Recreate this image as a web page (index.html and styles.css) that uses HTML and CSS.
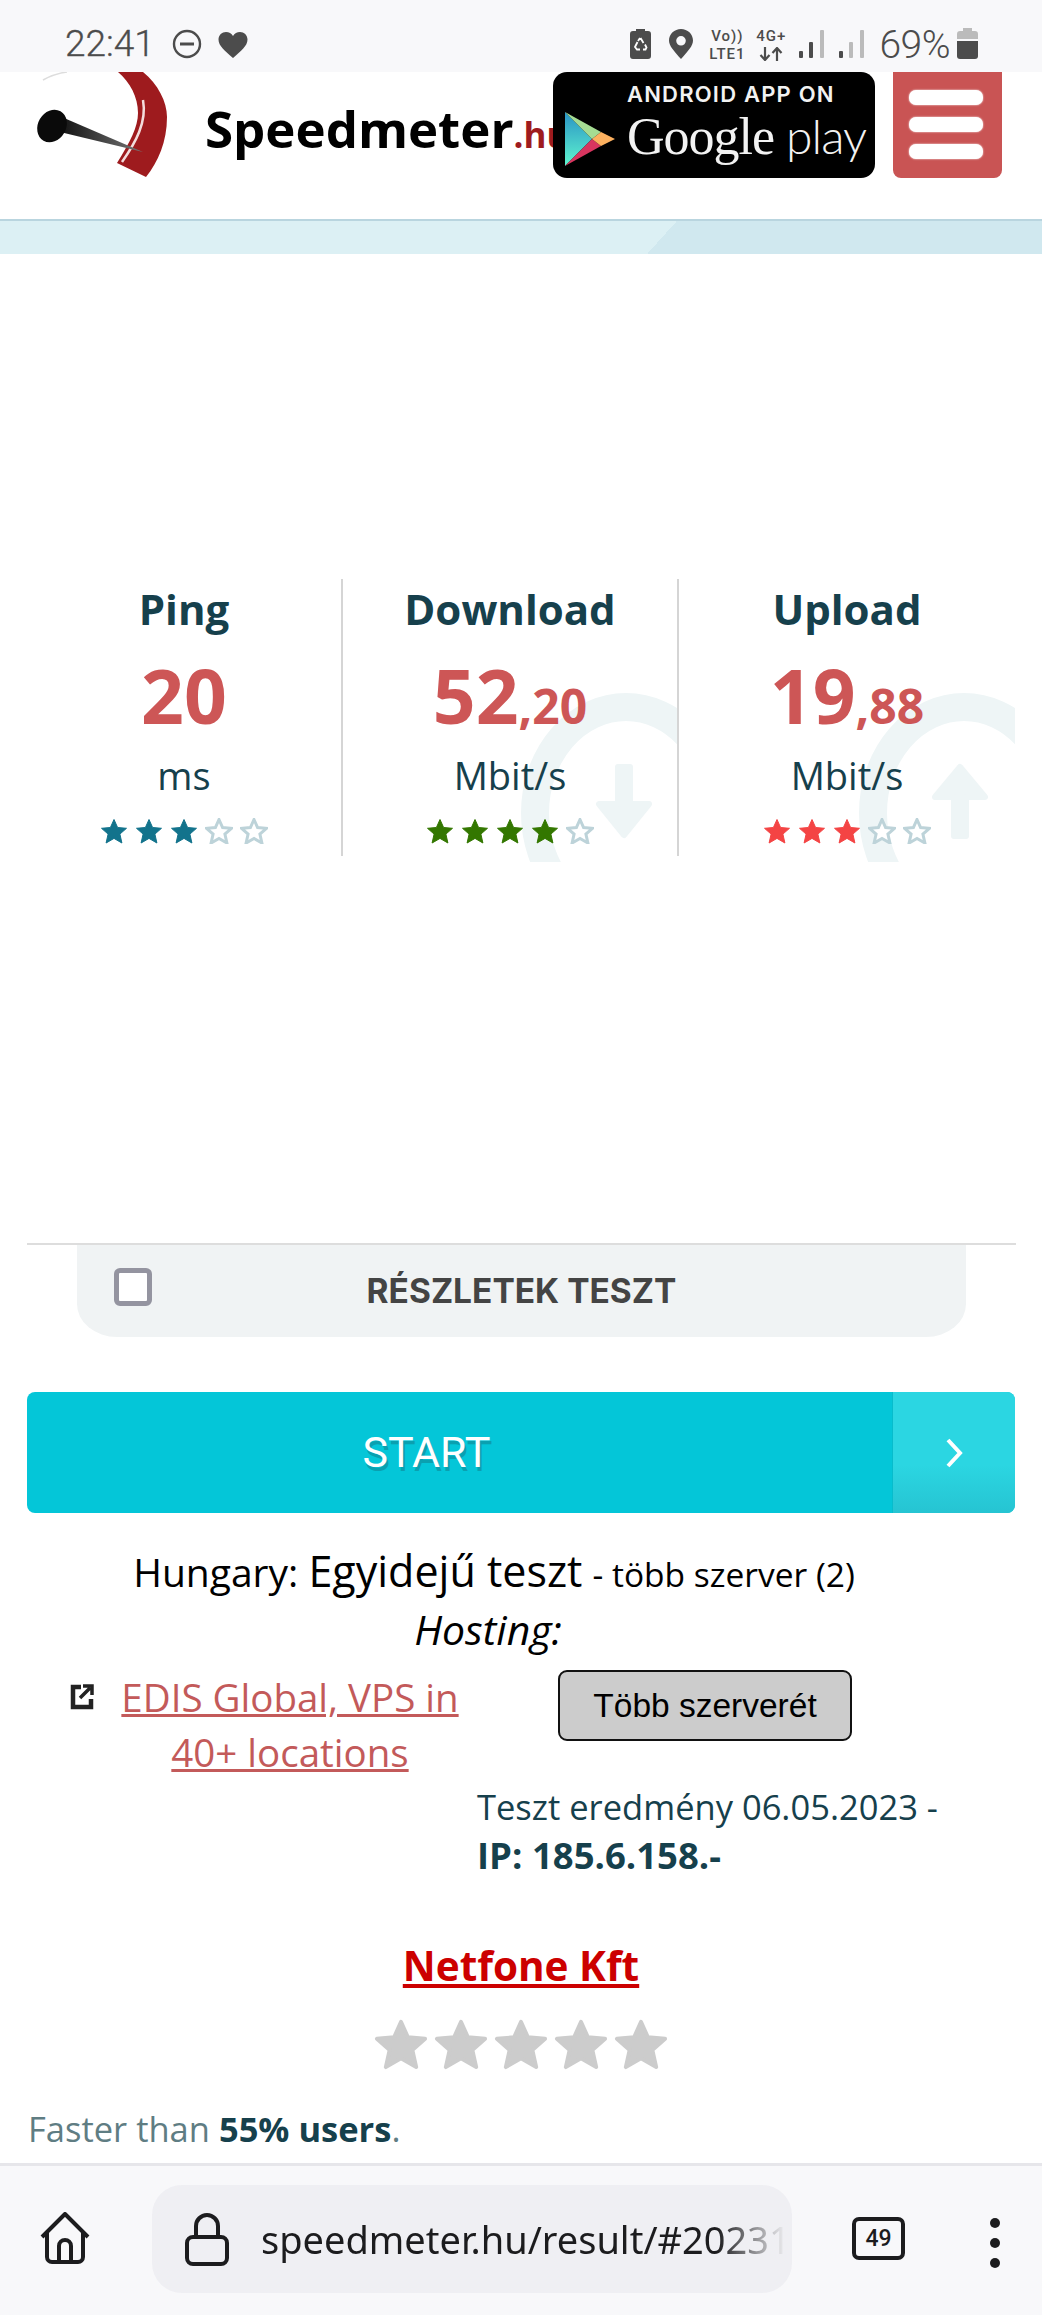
FILE: index.html
```html
<!DOCTYPE html>
<html>
<head>
    <title>Speedmeter.hu</title>
    <link rel="stylesheet" href="styles.css">
</head>
<body>
    <svg class="defs" width="0" height="0">
        <symbol id="star" viewBox="0 0 28 26">
            <path d="M14 1.5l3.6 8 8.9.8-6.6 5.8 2 8.9L14 20.4 6.1 25l2-8.9-6.6-5.8 8.9-.8z"/>
        </symbol>
        <linearGradient id="play-left" x1="0" y1="0" x2="0" y2="1">
            <stop offset="0" stop-color="#2a93c4"/>
            <stop offset="1" stop-color="#5ff5cf"/>
        </linearGradient>
        <linearGradient id="needle" x1="0" y1="0" x2="1" y2="0">
            <stop offset="0" stop-color="#111"/>
            <stop offset="1" stop-color="#777"/>
        </linearGradient>
    </svg>
    <div class="page">
        <div class="statusbar">
            <span class="clock">22:41</span>
            <svg class="ic-dnd" viewBox="0 0 30 30"><circle cx="15" cy="15" r="13" fill="none" stroke="#4c4c4c" stroke-width="2.4"/><path d="M8 15h14" stroke="#4c4c4c" stroke-width="3"/></svg>
            <svg class="ic-heart" viewBox="0 0 30 26"><path d="M15 26C7 19 .5 14 .5 7.5 .5 3 4 0 8 0c3 0 5.500 1.500 7 4 1.500-2.500 4-4 7-4 4 0 7.500 3 7.500 7.500C29.500 14 23 19 15 26z" fill="#4c4c4c"/></svg>
            <div class="status-right">
                <svg class="ic-saver" viewBox="0 0 21 30"><path d="M6 0h9v2h3a3 3 0 0 1 3 3v22a3 3 0 0 1-3 3H3a3 3 0 0 1-3-3V5a3 3 0 0 1 3-3h3z" fill="#4c4c4c"/><path d="M10.500 9l3 5M7.500 13l-2.500 5 2 2.500h3M13 20.500h2.500l1-2-1.500-3M10 9l-2 3" fill="none" stroke="#fff" stroke-width="1.800"/></svg>
                <svg class="ic-pin" viewBox="0 0 24 30"><path fill-rule="evenodd" d="M12 30C5 22 0 17 0 11.500 0 5 5.500 0 12 0s12 5 12 11.500C24 17 19 22 12 30zM12 7a4.800 4.800 0 1 0 0 9.600A4.800 4.800 0 0 0 12 7z" fill="#4c4c4c"/></svg>
                <div class="net net-volte"><span>Vo))</span><span>LTE1</span></div>
                <div class="net net-4g">
                    <span>4G+</span>
                    <svg class="ic-updown" viewBox="0 0 24 14"><path d="M6 0v12M1.500 8L6 13l4.500-5M18 14V2M13.500 6L18 1l4.500 5" fill="none" stroke="#4c4c4c" stroke-width="2.200"/></svg>
                </div>
                <svg class="ic-signal" viewBox="0 0 26 28"><rect x="0" y="21" width="4" height="7" rx="1" fill="#4c4c4c"/><rect x="10" y="12" width="4" height="16" rx="1" fill="#4c4c4c"/><rect x="21" y="0" width="4" height="28" rx="1" fill="#bbb"/></svg>
                <svg class="ic-signal" viewBox="0 0 26 28"><rect x="0" y="21" width="4" height="7" rx="1" fill="#4c4c4c"/><rect x="10" y="12" width="4" height="16" rx="1" fill="#bbb"/><rect x="21" y="0" width="4" height="28" rx="1" fill="#bbb"/></svg>
                <span class="battery-pct">69%</span>
                <svg class="ic-battery" viewBox="0 0 21 31"><path d="M6 0h9v3h3a3 3 0 0 1 3 3v5H0V6a3 3 0 0 1 3-3h3z" fill="#bbb"/><path d="M0 13h21v15a3 3 0 0 1-3 3H3a3 3 0 0 1-3-3z" fill="#4c4c4c"/></svg>
            </div>
        </div>

        <div class="topbar">
            <div class="brand">
                <svg class="logo" viewBox="0 0 190 107">
                    <path d="M118 0H143C158 12 167 30 167 45 167 70 158 90 146 105L117 91C130 70 138 55 138 41 138 25 130 10 118 0z" fill="#9e1b1e"/>
                    <path d="M143 28C147 50 136 70 122 90" fill="none" stroke="#f3dcdc" stroke-width="2.500"/>
                    <path d="M43 8C50 4 58 1 67 0" fill="none" stroke="#ddd" stroke-width="1.500"/>
                    <path d="M64 46L143 80 60 60z" fill="url(#needle)"/>
                    <ellipse cx="52" cy="54" rx="14" ry="17" transform="rotate(30 52 54)" fill="#0a0a0a"/>
                </svg>
                <span class="brand-name">Speedmeter</span><span class="brand-tld">.hu</span>
            </div>
            <div class="playbadge">
                <svg class="play-icon" viewBox="0 0 50 54">
                    <path d="M0 0L27 27 0 54z" fill="url(#play-left)"/>
                    <path d="M0 0L36 20 27 27z" fill="#a5dc92"/>
                    <path d="M0 54L36 34 27 27z" fill="#d8355f"/>
                    <path d="M36 20L50 27 36 34 27 27z" fill="#fcb05f"/>
                </svg>
                <div class="play-text">
                    <div class="play-top">ANDROID APP ON</div>
                    <div class="play-name">Google <span>play</span></div>
                </div>
            </div>
            <div class="menubtn">
                <i></i><i></i><i></i>
            </div>
        </div>
        <div class="band"></div>

        <div class="main">
            <div class="stats">
                <div class="stat">
                    <div class="stat-title">Ping</div>
                    <div class="stat-value">20</div>
                    <div class="stat-unit">ms</div>
                    <div class="stars teal">
                        <svg class="star"><use href="#star"/></svg>
                        <svg class="star"><use href="#star"/></svg>
                        <svg class="star"><use href="#star"/></svg>
                        <svg class="star empty"><use href="#star"/></svg>
                        <svg class="star empty"><use href="#star"/></svg>
                    </div>
                </div>
                <div class="stat">
                    <svg class="watermark" viewBox="0 0 156 169"><ellipse cx="105" cy="120" rx="91" ry="106" fill="none" stroke="#eef5f6" stroke-width="28"/><path d="M97 74h12v37h19l-25 31-25-31h19z" fill="#eef5f6" stroke="#eef5f6" stroke-width="6" stroke-linejoin="round"/></svg>
                    <div class="stat-title">Download</div>
                    <div class="stat-value">52<small>,20</small></div>
                    <div class="stat-unit">Mbit/s</div>
                    <div class="stars green">
                        <svg class="star"><use href="#star"/></svg>
                        <svg class="star"><use href="#star"/></svg>
                        <svg class="star"><use href="#star"/></svg>
                        <svg class="star"><use href="#star"/></svg>
                        <svg class="star empty"><use href="#star"/></svg>
                    </div>
                </div>
                <div class="stat">
                    <svg class="watermark" viewBox="0 0 156 169"><ellipse cx="105" cy="120" rx="91" ry="106" fill="none" stroke="#eef5f6" stroke-width="28"/><path d="M101 74l25 30h-19v39H95v-39H76z" fill="#eef5f6" stroke="#eef5f6" stroke-width="6" stroke-linejoin="round"/></svg>
                    <div class="stat-title">Upload</div>
                    <div class="stat-value">19<small>,88</small></div>
                    <div class="stat-unit">Mbit/s</div>
                    <div class="stars red">
                        <svg class="star"><use href="#star"/></svg>
                        <svg class="star"><use href="#star"/></svg>
                        <svg class="star"><use href="#star"/></svg>
                        <svg class="star empty"><use href="#star"/></svg>
                        <svg class="star empty"><use href="#star"/></svg>
                    </div>
                </div>
            </div>

            <div class="details">
                <span class="checkbox"></span>
                <span class="details-label">RÉSZLETEK TESZT</span>
            </div>

            <div class="startbtn">
                <span class="start-label">START</span>
                <span class="start-arrow">
                    <svg viewBox="0 0 20 30" width="20" height="30"><path d="M4 2l12 13L4 28" fill="none" stroke="#fff" stroke-width="4"/></svg>
                </span>
            </div>

            <div class="server">
                <div>Hungary: <span class="server-name">Egyidejű teszt</span> <small>- több szerver (2)</small></div>
                <div class="server-host"><em>Hosting:</em></div>
            </div>

            <div class="hostrow">
                <svg class="ic-ext" viewBox="0 0 24 27"><path d="M11 4H3v20h18v-8" fill="none" stroke="#222" stroke-width="4.500"/><path d="M10 15L20 5M13 3h9v9" fill="none" stroke="#222" stroke-width="3.500"/></svg>
                <a class="hostlink" href="#">EDIS Global, VPS in 40+ locations</a>
                <button class="morebtn">Több szerverét</button>
            </div>

            <div class="result">
                <div>Teszt eredmény 06.05.2023 -</div>
                <div><b>IP: 185.6.158.-</b></div>
            </div>

            <div class="isp"><a href="#">Netfone Kft</a></div>
            <div class="isp-stars">
                <svg class="star-big"><use href="#star"/></svg>
                <svg class="star-big"><use href="#star"/></svg>
                <svg class="star-big"><use href="#star"/></svg>
                <svg class="star-big"><use href="#star"/></svg>
                <svg class="star-big"><use href="#star"/></svg>
            </div>
            <div class="faster">Faster than <b>55% users</b>.</div>
        </div>

        <div class="toolbar">
            <svg class="ic-home" viewBox="0 0 50 52"><path d="M2 25L25 2l23 23M7 21v24a5 5 0 0 0 5 5h26a5 5 0 0 0 5-5V21M19 50V34a6 6 0 0 1 12 0v16" fill="none" stroke="#1c1c1e" stroke-width="4" stroke-linejoin="round"/></svg>
            <div class="urlbar">
                <svg class="ic-lock" viewBox="0 0 44 54"><path d="M11 25V14a11 11 0 0 1 22 0v11" fill="none" stroke="#1c1c1e" stroke-width="4"/><rect x="2" y="25" width="40" height="27" rx="6" fill="none" stroke="#1c1c1e" stroke-width="4"/></svg>
                <span class="urltext">speedmeter.hu/result/#20231</span>
            </div>
            <div class="tabs">49</div>
            <div class="dots"><i></i><i></i><i></i></div>
        </div>
    </div>
</body>
</html>
```

FILE: styles.css
```css
html, body {
    margin: 0;
    padding: 0;
    background: #fff;
}

.defs {
    display: block;
    height: 0;
}

.page {
    width: 1042px;
    height: 2315px;
    display: flex;
    flex-direction: column;
    overflow: hidden;
    font-family: "Open Sans", Arial, sans-serif;
    color: #000;
}

/* status bar */
.statusbar {
    height: 72px;
    flex: none;
    background: #f8f8fa;
    display: flex;
    align-items: flex-start;
    font-family: Roboto, sans-serif;
    color: #4c4c4c;
}

.clock {
    margin: 23px 0 0 65px;
    font-size: 37px;
    line-height: 42px;
    font-weight: 300;
    -webkit-text-stroke: 0.3px #4c4c4c;
}

.ic-dnd {
    width: 30px;
    height: 30px;
    margin: 29px 0 0 17px;
}

.ic-heart {
    width: 30px;
    height: 26px;
    margin: 32px 0 0 16px;
}

.status-right {
    margin-left: auto;
    margin-right: 64px;
    display: flex;
    align-items: flex-start;
    padding-top: 29px;
}

.ic-saver {
    width: 21px;
    height: 30px;
}

.ic-pin {
    width: 24px;
    height: 30px;
    margin-left: 18px;
}

.net {
    display: flex;
    flex-direction: column;
    align-items: center;
    margin-top: -2px;
    font-size: 15px;
    font-weight: 500;
    letter-spacing: 1px;
    height: 30px;
}

.net-volte {
    margin-left: 14px;
    width: 40px;
}

.net-4g {
    margin-left: 7px;
    width: 34px;
}

.ic-updown {
    width: 24px;
    height: 14px;
    margin-top: 2px;
    flex: none;
}

.ic-signal {
    width: 26px;
    height: 28px;
    margin-left: 11px;
    margin-top: 1px;
}

.ic-signal + .ic-signal {
    margin-left: 14px;
}

.battery-pct {
    margin-left: 14px;
    font-size: 39px;
    line-height: 32px;
    font-weight: 300;
    letter-spacing: -0.5px;
}

.ic-battery {
    width: 21px;
    height: 31px;
    margin-left: 7px;
    margin-top: -1px;
}

/* header */
.topbar {
    flex: none;
    height: 147px;
    border-bottom: 2px solid #b9d5df;
    display: flex;
    align-items: flex-start;
    overflow: hidden;
}

.brand {
    width: 553px;
    height: 106px;
    flex: none;
    display: flex;
    align-items: baseline;
    overflow: hidden;
    white-space: nowrap;
}

.logo {
    width: 190px;
    height: 107px;
    flex: none;
    align-self: flex-start;
}

.brand-name {
    margin-left: 15px;
    font-size: 51px;
    line-height: 112px;
    font-weight: 700;
}

.brand-tld {
    font-size: 35px;
    font-weight: 700;
    color: #9e1b1e;
}

.playbadge {
    width: 322px;
    height: 106px;
    flex: none;
    box-sizing: border-box;
    background: #000;
    border-radius: 14px;
    display: flex;
    color: #f2f2f2;
    padding-left: 12px;
}

.play-icon {
    width: 50px;
    height: 54px;
    margin-top: 40px;
    flex: none;
}

.play-text {
    margin-left: 12px;
}

.play-top {
    font-family: Inter, sans-serif;
    font-size: 22px;
    font-weight: 600;
    line-height: 24px;
    letter-spacing: 1.2px;
    margin-top: 10px;
    white-space: nowrap;
}

.play-name {
    font-family: "Liberation Serif", serif;
    font-size: 52px;
    line-height: 56px;
    margin-top: 2px;
    letter-spacing: -1px;
    white-space: nowrap;
}

.play-name span {
    font-family: Lato, sans-serif;
    font-weight: 300;
    font-size: 48px;
}

.menubtn {
    width: 109px;
    height: 106px;
    flex: none;
    box-sizing: border-box;
    margin-left: 18px;
    padding: 18px 0 0 16px;
    background: #c95454;
    border-radius: 0 0 8px 8px;
}

.menubtn i {
    display: block;
    width: 74px;
    height: 15px;
    margin-bottom: 12px;
    background: #fff;
    border-radius: 7px;
    box-shadow: 0 0 2px #fff;
}

.band {
    flex: none;
    height: 33px;
    background: linear-gradient(132deg, #dcf0f4 503px, #d0e8ef 503px);
}

/* results */
.main {
    flex: 1;
}

.stats {
    display: grid;
    grid-template-columns: 314px 336px 338px;
    margin: 325px 27px 0;
    text-align: center;
    color: #16404c;
}

.stat {
    position: relative;
    height: 277px;
    border-left: 2px solid #d5d5d5;
}

.stat:first-child {
    border-left: none;
}

.stat > div {
    position: relative;
}

.watermark {
    position: absolute;
    right: 0;
    bottom: -6px;
    width: 156px;
    height: 169px;
}

.stat-title {
    font-size: 42px;
    line-height: 60px;
    font-weight: 700;
}

.stat-value {
    margin-top: 16px;
    font-size: 75px;
    line-height: 80px;
    font-weight: 700;
    color: #cd5656;
}

.stat-value small {
    font-size: 48px;
    line-height: 0;
}

.stat-unit {
    margin-top: 15px;
    font-size: 38px;
    line-height: 50px;
}

.stars {
    margin-top: 18px;
    display: flex;
    justify-content: center;
    gap: 7px;
}

.star {
    width: 28px;
    height: 26px;
    fill: currentColor;
    stroke: currentColor;
    stroke-width: 1px;
}

.star.empty {
    fill: #fff;
    stroke: #bdd3d9;
    stroke-width: 3px;
}

.teal { color: #12738c; }
.green { color: #337700; }
.red { color: #f44444; }

.details {
    margin: 387px 76px 0 77px;
    height: 94px;
    box-sizing: border-box;
    border-top: 2px solid #ddd;
    background: #f0f3f4;
    border-radius: 0 0 40px 40px / 0 0 33px 33px;
    display: flex;
    align-items: flex-start;
    padding-top: 23px;
    position: relative;
}

.details::before {
    content: "";
    position: absolute;
    top: -2px;
    left: -50px;
    right: -50px;
    height: 2px;
    background: #ddd;
}

.checkbox {
    width: 38px;
    height: 38px;
    margin-left: 37px;
    flex: none;
    box-sizing: border-box;
    background: #fff;
    border: 5px solid #9494a0;
    border-radius: 6px;
}

.details-label {
    flex: 1;
    margin-top: 3px;
    padding-right: 75px;
    text-align: center;
    font-family: Inter, sans-serif;
    font-size: 33.5px;
    line-height: 40px;
    font-weight: 700;
    color: #444;
}

.startbtn {
    margin: 55px 27px 0;
    height: 121px;
    display: flex;
    background: #04c6d8;
    border-radius: 8px;
    overflow: hidden;
}

.start-label {
    flex: 1;
    padding-right: 66px;
    text-align: center;
    font-family: Roboto, sans-serif;
    font-size: 43px;
    line-height: 121px;
    color: #fff;
    text-shadow: 2px 4px 0 #0aa0b0;
}

.start-arrow {
    width: 123px;
    flex: none;
    display: flex;
    align-items: center;
    justify-content: center;
    background: linear-gradient(#2bd6e2, #2bd6e2 60%, #26c4d2);
    border-left: 1px solid #07bccc;
    box-sizing: border-box;
}

.server {
    margin: 30px 0 0 27px;
    width: 934px;
    text-align: center;
    font-size: 39px;
    line-height: 55px;
    white-space: nowrap;
}

.server-name {
    font-size: 43px;
}

.server small {
    font-size: 33.5px;
}

.server-host {
    padding-right: 12px;
}

.server em {
    font-size: 41px;
}

.hostrow {
    margin-top: 13px;
    padding-left: 70px;
    height: 110px;
    display: flex;
    align-items: flex-start;
}

.ic-ext {
    width: 24px;
    height: 27px;
    margin-top: 13px;
    flex: none;
}

.hostlink {
    width: 360px;
    margin-left: 16px;
    flex: none;
    text-align: center;
    font-size: 38.5px;
    line-height: 55px;
    color: #c35a5a;
}

.morebtn {
    width: 294px;
    height: 71px;
    margin-left: 88px;
    flex: none;
    box-sizing: border-box;
    background: #ccc;
    border: 2px solid #111;
    border-radius: 9px;
    font-family: "Liberation Sans", Arial, sans-serif;
    font-size: 33.5px;
    color: #000;
}

.result {
    margin: 2px 0 0 477px;
    font-size: 34.5px;
    line-height: 49px;
    color: #16404c;
    white-space: nowrap;
}

.result b {
    font-size: 36.5px;
}

.isp {
    margin-top: 56px;
    text-align: center;
    font-size: 40.5px;
    line-height: 60px;
    font-weight: 700;
}

.isp a {
    color: #cc0000;
}

.isp-stars {
    margin-top: 21px;
    display: flex;
    justify-content: center;
    gap: 6px;
}

.star-big {
    width: 54px;
    height: 54px;
    fill: #ccc;
    stroke: #ccc;
    stroke-width: 2px;
    stroke-linejoin: round;
}

.faster {
    margin: 33px 0 0 28px;
    font-size: 34.5px;
    line-height: 50px;
    color: #5f7d83;
}

.faster b {
    color: #16404c;
}

/* browser toolbar */
.toolbar {
    flex: none;
    height: 152px;
    box-sizing: border-box;
    border-top: 3px solid #e6e6ea;
    background: #f8f8fa;
    padding-top: 19px;
    display: flex;
    align-items: flex-start;
}

.ic-home {
    width: 50px;
    height: 52px;
    margin: 27px 0 0 40px;
    flex: none;
}

.urlbar {
    width: 640px;
    height: 108px;
    margin-left: 62px;
    flex: none;
    box-sizing: border-box;
    padding: 0 0 0 33px;
    background: #efeff3;
    border-radius: 30px;
    display: flex;
    align-items: center;
}

.ic-lock {
    width: 44px;
    height: 54px;
    flex: none;
}

.urltext {
    margin-left: 32px;
    flex: none;
    white-space: nowrap;
    font-family: "Noto Sans", sans-serif;
    font-size: 38px;
    color: #1c1c1e;
    -webkit-mask-image: linear-gradient(to right, #000 86%, transparent 99%);
    mask-image: linear-gradient(to right, #000 86%, transparent 99%);
}

.tabs {
    width: 53px;
    height: 43px;
    margin: 32px 0 0 60px;
    flex: none;
    box-sizing: border-box;
    border: 4px solid #1c1c1e;
    border-radius: 7px;
    text-align: center;
    font-family: Roboto, sans-serif;
    font-size: 23px;
    line-height: 35px;
    font-weight: 500;
    color: #1c1c1e;
}

.dots {
    margin: 33px 0 0 85px;
    flex: none;
}

.dots i {
    display: block;
    width: 10px;
    height: 10px;
    margin-bottom: 10px;
    border-radius: 50%;
    background: #1c1c1e;
}
```
